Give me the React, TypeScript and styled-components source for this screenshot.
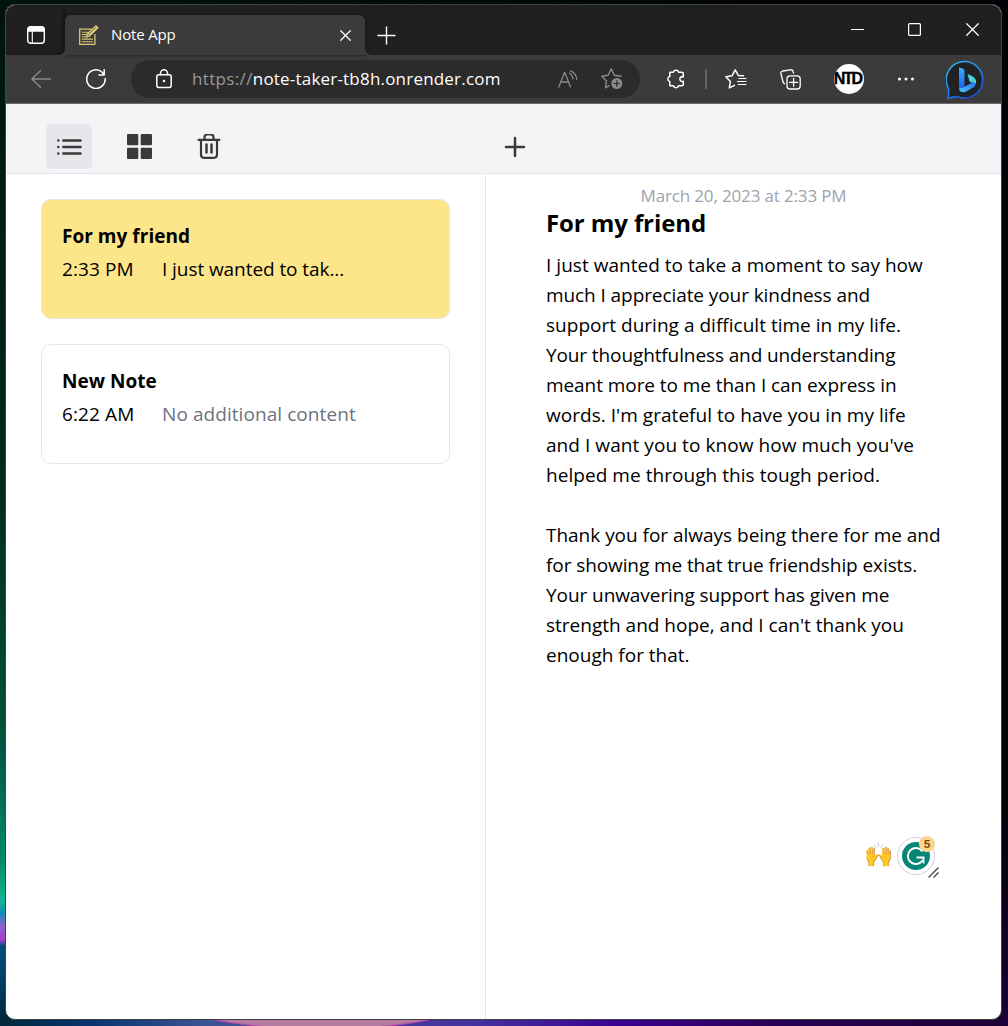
import React from "react";
import styled, { createGlobalStyle } from "styled-components";

const GlobalStyle = createGlobalStyle`
  *, *::before, *::after { box-sizing: border-box; }
  body { margin: 0; overflow: hidden; }
  button { border: 0; padding: 0; background: none; font: inherit; color: inherit; }
  svg { display: block; flex: none; }
`;

const Desktop = styled.div`
  height: 1026px;
  padding: 4px 6px 6px 5px;
  font-family: "Open Sans", "Noto Sans", sans-serif;
  background:
    radial-gradient(ellipse 138px 23.5px at 322px 1006px, #b57ba0 0 93%, #b23cab 98%, transparent 100%) no-repeat,
    linear-gradient(90deg, #00283a 0, #063470 90px, #3d5494 210px, #45309f 480px, #380090 620px, #2b0058 760px, #1c0035 1000px) 0 100% / 100% 8px no-repeat,
    linear-gradient(180deg, #00140d 0, #001c12 200px, #002a1d 480px, #00523d 740px, #008a6b 860px, #12b592 901px, #1688b8 914px, #8c65cc 925px, #a23ccf 940px, #004c7a 946px, #003e63 985px, #00283a 1018px) 0 0 / 8px 100% no-repeat,
    linear-gradient(180deg, #020306 0, #020306 800px, #10001f 930px, #1c0035 1020px) 100% 0 / 8px 100% no-repeat,
    linear-gradient(90deg, #00140d, #010b07 500px, #020306 750px);
`;

const BrowserWindow = styled.div`
  height: 1016px;
  display: flex;
  flex-direction: column;
  overflow: hidden;
  border: 1px solid #3c4341;
  border-radius: 10px;
  background: #fff;
`;

const TitleBar = styled.div`
  height: 50px;
  display: flex;
  flex: none;
  background: #202020;
  color: #fff;
`;

const TabActions = styled.button`
  width: 59px;
  padding: 9px 0 0 1px;
  display: grid;
  place-items: center;
  border-radius: 0 0 5px 0;
  box-shadow: inset -4px -2px 4px -3px #111;
`;

const Tab = styled.div`
  position: relative;
  width: 300px;
  height: 40px;
  margin-top: 10px;
  padding: 0 14px 0 14px;
  display: flex;
  align-items: center;
  border-radius: 6px 6px 0 0;
  background: #3b3b3b;
  box-shadow: 0 0 3px #111;

  &::before, &::after {
    content: "";
    position: absolute;
    bottom: 0;
    width: 6px;
    height: 6px;
  }
  &::before { left: -6px; background: radial-gradient(circle at 0 0, transparent 5.5px, #3b3b3b 6px); }
  &::after { right: -6px; background: radial-gradient(circle at 100% 0, transparent 5.5px, #3b3b3b 6px); }
`;

const TabTitle = styled.span`
  flex: 1;
  margin: 0 0 2px 12px;
  font-size: 15px;
  line-height: 20px;
  letter-spacing: -0.15px;
`;

const NewTab = styled.button`
  width: 43px;
  display: grid;
  place-items: center;
  padding-top: 10px;
`;

const WindowControls = styled.div`
  margin-left: auto;
  display: flex;
`;

const WindowButton = styled.button`
  width: 57.5px;
  display: grid;
  place-items: center;
  padding-bottom: 1px;
`;

const NavBar = styled.div`
  height: 49px;
  flex: none;
  display: flex;
  align-items: center;
  color: #fff;
  background: #3b3b3b;
  border-bottom: 1px solid #6c6c6c;
`;

const NavButton = styled.button<{ $width: number; $dim?: boolean }>`
  width: ${(p) => p.$width}px;
  height: 38px;
  flex: none;
  display: grid;
  place-items: center;
  color: ${(p) => (p.$dim ? "#8a8a8a" : "#fff")};
`;

const AddressBar = styled.div`
  width: 509px;
  height: 38px;
  margin: 0 10px 0 14px;
  padding: 0 17px 0 25px;
  display: flex;
  align-items: center;
  gap: 23px;
  border-radius: 19px;
  background: #2b2b2b;
`;

const Url = styled.span`
  flex: 1;
  margin-left: -3px;
  font-size: 17px;
  line-height: 24px;
  letter-spacing: 0.2px;
  white-space: nowrap;
`;

const Scheme = styled.span`
  color: #999;
  letter-spacing: 0.35px;
`;

const Separator = styled.span`
  width: 2px;
  height: 20px;
  margin: 0 3px;
  background: #646464;
`;

const Avatar = styled.span`
  width: 30px;
  height: 30px;
  display: grid;
  place-items: center;
  overflow: hidden;
  border-radius: 50%;
  background: #fff;
  color: #000;
  font: 700 16px/30px "Liberation Sans", sans-serif;
  letter-spacing: -1.8px;
  text-indent: -2px;
  -webkit-text-stroke: 0.4px #000;
`;

const Toolbar = styled.header`
  height: 70px;
  flex: none;
  display: grid;
  grid-template-columns: 480px 1fr;
  align-items: end;
  padding-bottom: 4px;
  background: #f3f4f6;
  border-bottom: 1px solid #e2e8f0;
  color: #3a3a3a;
`;

const ToolGroup = styled.div<{ $inset: number }>`
  display: flex;
  gap: 24px;
  padding-left: ${(p) => p.$inset}px;
`;

const ToolButton = styled.button<{ $active?: boolean }>`
  width: 46px;
  height: 45px;
  display: grid;
  place-items: center;
  border-radius: 5px;
  background: ${(p) => (p.$active ? "#e5e7eb" : "transparent")};
`;

const Workspace = styled.main`
  flex: 1;
  display: grid;
  grid-template-columns: 480px 1fr;
  color: #000;
`;

const NoteList = styled.section`
  display: flex;
  flex-direction: column;
  gap: 25px;
  padding: 25px 35px;
  border-right: 1px solid #e2e8f0;
`;

const NoteCard = styled.article<{ $selected?: boolean }>`
  height: 120px;
  padding: 21px 20px;
  border: 1px solid #e5e7eb;
  border-radius: 10px;
  background: ${(p) => (p.$selected ? "#fde68a" : "#fff")};
`;

const CardTitle = styled.h2`
  margin: 0;
  font-size: 19px;
  line-height: 30px;
  font-weight: 700;
  letter-spacing: 0.03px;
`;

const CardSummary = styled.div`
  display: grid;
  grid-template-columns: 100px 1fr;
  margin-top: 3px;
  font-size: 19px;
  line-height: 30px;
`;

const CardTime = styled.span`
  letter-spacing: 0.1px;
`;

const CardPreview = styled.span<{ $empty?: boolean }>`
  color: ${(p) => (p.$empty ? "#6b7280" : "#000")};
  letter-spacing: ${(p) => (p.$empty ? 0.07 : -0.07)}px;
`;

const Editor = styled.section`
  position: relative;
  padding: 8px 60px 0;
`;

const DateLine = styled.p`
  margin: 0;
  text-align: center;
  font-size: 17px;
  line-height: 27px;
  letter-spacing: -0.15px;
  color: #9ca3af;
`;

const NoteTitle = styled.h1`
  margin: -2px 0 11px;
  font-size: 24px;
  line-height: 32px;
  font-weight: 700;
  letter-spacing: -0.1px;
`;

const Paragraph = styled.p`
  margin: 0 0 30px;
  font-size: 19px;
  line-height: 30px;
  white-space: nowrap;
`;

const Line = styled.span<{ $tracking: number }>`
  display: block;
  letter-spacing: ${(p) => p.$tracking}px;
`;

const Assistant = styled.div`
  position: absolute;
  right: 61px;
  top: 659px;
  display: flex;
  gap: 5px;
  width: 76px;
  height: 46px;
`;

const Emoji = styled.span`
  width: 28px;
  font: 23.5px/45px "Noto Color Emoji", sans-serif;
`;

const Checker = styled.div`
  position: relative;
  width: 38px;
  height: 38px;
  margin-top: 4px;
  flex: none;
  display: grid;
  place-items: center;
  border: 1.5px solid #cfd1e0;
  border-radius: 50%;
  background: #fff;
`;

const Badge = styled.span`
  position: absolute;
  right: -1px;
  top: -2px;
  width: 16px;
  height: 16px;
  border-radius: 50%;
  background: #fdd592;
  color: #7a4300;
  font: 700 11px/16px Inter, sans-serif;
  text-align: center;
`;

const Grip = styled.svg`
  position: absolute;
  right: 1px;
  bottom: 1px;
`;

type Row = [string, number];
const paragraphs: Row[][] = [
  [
    ["I just wanted to take a moment to say how", 0.03],
    ["much I appreciate your kindness and", -0.08],
    ["support during a difficult time in my life.", 0.02],
    ["Your thoughtfulness and understanding", -0.11],
    ["meant more to me than I can express in", -0.07],
    ["words. I'm grateful to have you in my life", 0.03],
    ["and I want you to know how much you've", 0.06],
    ["helped me through this tough period.", 0.05],
  ],
  [
    ["Thank you for always being there for me and", -0.02],
    ["for showing me that true friendship exists.", -0.09],
    ["Your unwavering support has given me", -0.07],
    ["strength and hope, and I can't thank you", 0],
    ["enough for that.", 0],
  ],
];

const notes = [
  { title: "For my friend", time: "2:33 PM", preview: "I just wanted to tak...", selected: true },
  { title: "New Note", time: "6:22 AM", preview: "No additional content", empty: true },
];

const stroke = {
  fill: "none",
  stroke: "currentColor",
  strokeWidth: 1.4,
  strokeLinecap: "round",
  strokeLinejoin: "round",
} as const;

const TabActionsIcon = () => (
  <svg width="18" height="18" viewBox="0 0 18 18" {...stroke}>
    <rect x=".7" y=".7" width="16.6" height="16.6" rx="3" />
    <path d="M1 3.500Q1 1 4 1h10q3 0 3 2.500V5H1z" fill="currentColor" />
    <path d="M5.300 5v12" strokeWidth="1.100" />
  </svg>
);

const MemoIcon = () => (
  <svg width="20" height="20" viewBox="0 0 20 20" fill="none" stroke="#d9c873" strokeWidth="1.300">
    <path d="M12.500 4.200H.7v15.100h15.200V9" />
    <path d="M2.800 7.200h6.500M2.800 9.500h5.500M2.800 11.800h4.500M2.800 14.100h11M2.800 16.700h11" strokeWidth="1.100" />
    <path d="m7.500 12 .8-3.100L17 .8l2 1.900-8.700 8.400zM9 8.500l2 2M10 10l8-7.700" />
  </svg>
);

const CloseIcon = ({ size }: { size: number }) => (
  <svg width={size} height={size} viewBox={`0 0 ${size} ${size}`} {...stroke} strokeWidth={1.25}>
    <path d={`M.7.7 ${size - 0.7} ${size - 0.7}M${size - 0.7} .7.7 ${size - 0.7}`} />
  </svg>
);

const BackIcon = () => (
  <svg width="20" height="18" viewBox="0 0 20 18" {...stroke} strokeWidth="1.300">
    <path d="M19.500 9H.8M9.500.7.8 9l8.700 8.300" />
  </svg>
);

const RefreshIcon = () => (
  <svg width="20" height="20" viewBox="0 0 20 20" {...stroke} strokeWidth="1.500">
    <path d="M19.200 9.500A9.250 9.250 0 1 1 16.200 3.300l2 2.700M18.200.7V6h-5.300" />
  </svg>
);

const LockIcon = () => (
  <svg width="16" height="20" viewBox="0 0 16 20" {...stroke} strokeWidth="1.500">
    <rect x=".8" y="5.800" width="14.400" height="12.700" rx="2" />
    <path d="M4.500 5.800V4.200a3.500 3.500 0 0 1 7 0v1.600" />
    <circle cx="8" cy="12" r="1.300" fill="currentColor" stroke="none" />
  </svg>
);

const ReadAloudIcon = () => (
  <svg width="20" height="19" viewBox="0 0 20 19" {...stroke} strokeWidth="1.300">
    <path d="m.8 17 5.700-14.500h.3L12.500 17M2.600 12h8.100M11.500 3.300c2 1 3.300 3 3.400 5.700M12.500.8c3.700 1.500 6 4.500 6.200 8.500" />
  </svg>
);

const STAR = "M20 8.300 13.200 7.300 10.200.8 7.200 7.300.8 8.300l4.700 4.800-1.100 6.700";

const StarAddIcon = () => (
  <svg width="22" height="22" viewBox="0 0 22 22" {...stroke}>
    <path d={STAR + "L8.300 17.700"} />
    <circle cx="15.800" cy="15.500" r="5.500" fill="currentColor" stroke="none" />
    <path d="M15.800 12.800v5.400M13.100 15.500h5.400" stroke="#2b2b2b" strokeWidth="1.200" />
  </svg>
);

const ExtensionsIcon = () => (
  <svg width="20" height="20" viewBox="0 0 20 20" {...stroke} strokeWidth="1.500">
    <path d="M3.800 3.200h3.500a2.800 2.500 0 0 1 5.400 0h3.100a1.500 1.500 0 0 1 1.500 1.500v3.200a2.400 2.400 0 1 0 0 4.300v3.100a1.500 1.500 0 0 1-1.500 1.500h-3.100a2.800 2.500 0 0 1-5.400 0H3.800v-4.200a2.700 2.700 0 0 1 0-5.200z" />
  </svg>
);

const FavoritesIcon = () => (
  <svg width="22" height="20" viewBox="0 0 22 20" {...stroke} strokeWidth="1.500">
    <path d="M18.500 6.800 13.300 6.400 10.200.8 7.200 6.700.8 7.700l4.600 4.700-1.100 6.500 5.200-2.600" />
    <path d="M14 9.500h7M12.500 12.500H21M13.300 15.500H21" strokeWidth="1.200" />
  </svg>
);

const CollectionsIcon = () => (
  <svg width="21" height="21" viewBox="0 0 21 21" {...stroke} strokeWidth="1.300">
    <path d="M4.500 14.700Q3.200 14 2.800 12L.9 4.500Q.5 2.600 2.600 2L10.500.8q2-.3 2.600 1.500l.4 1.700" />
    <rect x="7" y="6.800" width="13.200" height="13.200" rx="3" />
    <path d="M13.600 9.500v7.800M9.700 13.400h7.800" />
  </svg>
);

const BingIcon = () => (
  <svg width="40" height="40" viewBox="0 0 40 40" fill="none">
    <defs>
      <linearGradient id="ring" x1="0" y1="0" x2=".6" y2="1">
        <stop stopColor="#2fb9f0" /><stop offset=".5" stopColor="#2590ed" /><stop offset="1" stopColor="#1b50d8" />
      </linearGradient>
      <linearGradient id="stem" x2="0" y2="1">
        <stop stopColor="#35b5ff" /><stop offset="1" stopColor="#2153e8" />
      </linearGradient>
      <linearGradient id="bowl" x1="1" y1="0" x2="0" y2="1">
        <stop stopColor="#2c6cf0" /><stop offset="1" stopColor="#42c6f5" />
      </linearGradient>
    </defs>
    <path d="M2 38.200Q2.900 34 2.500 28.500A18.200 18.200 0 1 1 12.500 37Q8 36.500 2 38.200z" fill="#202124" stroke="url(#ring)" strokeWidth="1.600" />
    <path d="m13 7.200 4 1.500q1.500.6 1.500 2.200v15.500L14.800 30Q13 28.500 13 26.500z" fill="url(#stem)" />
    <path d="M21.500 14q7 2.300 8.500 6.500.7 2.700-1.500 5.200-1.200-2.700-5-4.200z" fill="#42d4d7" />
    <path d="m24.500 21.200 3.800 1.300q2.200 1.600.2 4.200l-8.800 5q-3.200 1.500-5.700-.7-1-1.200-1-3.500 2.200 1.400 5-.5l8-4.300z" fill="url(#bowl)" />
  </svg>
);

const ListIcon = () => (
  <svg width="26" height="18" viewBox="0 0 26 18" {...stroke} strokeWidth="2.400">
    <path d="M7.300 2.500h17.300M7.300 9h17.300M7.300 15.500h17.300" />
    <path d="M2.300 2.500h.1M2.300 9h.1M2.300 15.500h.1" />
  </svg>
);

const GridIcon = () => (
  <svg width="26" height="26" viewBox="0 0 26 26" fill="currentColor">
    <rect x="1" y="0" width="11.300" height="11.300" rx="1" />
    <rect x="14.700" y="0" width="11.300" height="11.300" rx="1" />
    <rect x="1" y="13.700" width="11.300" height="11.300" rx="1" />
    <rect x="14.700" y="13.700" width="11.300" height="11.300" rx="1" />
  </svg>
);

const TrashIcon = () => (
  <svg width="24" height="26" viewBox="0 1 24 26" {...stroke} strokeWidth="2.200">
    <path d="M1.500 6.800h21M4 6.800v15q0 3 3 3h10q3 0 3-3v-15M7.500 6.500V4.300q0-2.800 2.800-2.800h3.400q2.800 0 2.800 2.800v2.200" />
    <path d="M9.500 11.500v8M14.500 11.500v8" strokeWidth="2.500" />
  </svg>
);

export default function App() {
  return (
    <Desktop>
      <GlobalStyle />
      <BrowserWindow>
        <TitleBar>
          <TabActions><TabActionsIcon /></TabActions>
          <Tab>
            <MemoIcon />
            <TabTitle>Note App</TabTitle>
            <CloseIcon size={11} />
          </Tab>
          <NewTab>
            <svg width="19" height="19" viewBox="0 0 19 19" {...stroke}>
              <path d="M9.500 1v17M1 9.500h17" />
            </svg>
          </NewTab>
          <WindowControls>
            <WindowButton><svg width="13" height="1"><path d="M0 .5h13" stroke="#fff" /></svg></WindowButton>
            <WindowButton>
              <svg width="13" height="13" {...stroke} strokeWidth="1.200"><rect x=".6" y=".6" width="11.800" height="11.800" rx="1" /></svg>
            </WindowButton>
            <WindowButton><CloseIcon size={13} /></WindowButton>
          </WindowControls>
        </TitleBar>

        <NavBar>
          <NavButton $width={69} $dim><BackIcon /></NavButton>
          <NavButton $width={42}><RefreshIcon /></NavButton>
          <AddressBar>
            <LockIcon />
            <Url><Scheme>https://</Scheme>note-taker-tb8h.onrender.com</Url>
            <NavButton $width={20} $dim><ReadAloudIcon /></NavButton>
            <NavButton $width={22} $dim><StarAddIcon /></NavButton>
          </AddressBar>
          <NavButton $width={52}><ExtensionsIcon /></NavButton>
          <Separator />
          <NavButton $width={52}><FavoritesIcon /></NavButton>
          <NavButton $width={57}><CollectionsIcon /></NavButton>
          <NavButton $width={59}><Avatar>NTD</Avatar></NavButton>
          <NavButton $width={55}>
            <svg width="18" height="4" fill="currentColor">
              <circle cx="2.500" cy="2" r="1.500" /><circle cx="9" cy="2" r="1.500" /><circle cx="15.500" cy="2" r="1.500" />
            </svg>
          </NavButton>
          <NavButton $width={65}><BingIcon /></NavButton>
        </NavBar>

        <Toolbar>
          <ToolGroup $inset={40}>
            <ToolButton $active><ListIcon /></ToolButton>
            <ToolButton><GridIcon /></ToolButton>
            <ToolButton><TrashIcon /></ToolButton>
          </ToolGroup>
          <ToolGroup $inset={6}>
            <ToolButton>
              <svg width="22" height="22" viewBox="0 0 22 22" {...stroke} strokeWidth="2.500">
                <path d="M11 2v18M2 11h18" />
              </svg>
            </ToolButton>
          </ToolGroup>
        </Toolbar>

        <Workspace>
          <NoteList>
            {notes.map((note) => (
              <NoteCard key={note.title} $selected={note.selected}>
                <CardTitle>{note.title}</CardTitle>
                <CardSummary>
                  <CardTime>{note.time}</CardTime>
                  <CardPreview $empty={note.empty}>{note.preview}</CardPreview>
                </CardSummary>
              </NoteCard>
            ))}
          </NoteList>
          <Editor>
            <DateLine>March 20, 2023 at 2:33 PM</DateLine>
            <NoteTitle>For my friend</NoteTitle>
            {paragraphs.map((lines, i) => (
              <Paragraph key={i}>
                {lines.map(([text, tracking]) => (
                  <Line key={text} $tracking={tracking}>{text}</Line>
                ))}
              </Paragraph>
            ))}
            <Assistant>
              <Emoji>🙌</Emoji>
              <Checker>
                <svg width="28" height="28" viewBox="0 0 28 28" fill="none">
                  <circle cx="14" cy="14" r="14" fill="#078576" />
                  <path d="M20.500 9.500A8 8 0 1 0 20.500 18.500M14.500 15.500h7v6" stroke="#fff" strokeWidth="1.900" />
                </svg>
                <Badge>5</Badge>
              </Checker>
              <Grip width="11" height="11" viewBox="0 0 11 11" stroke="#444" strokeWidth="1.400">
                <path d="M.5 10.500 10.500.5M5.500 10.500l5-5" />
              </Grip>
            </Assistant>
          </Editor>
        </Workspace>
      </BrowserWindow>
    </Desktop>
  );
}
